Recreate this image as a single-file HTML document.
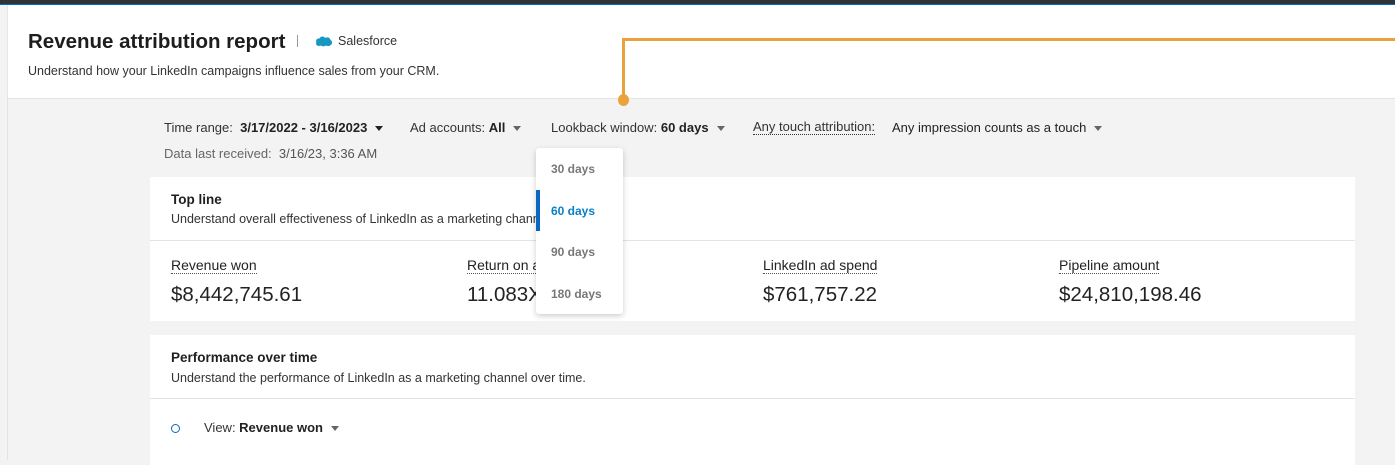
<!DOCTYPE html>
<html><head><meta charset="utf-8"><style>
*{margin:0;padding:0;box-sizing:border-box}
body{width:1395px;height:460px;overflow:hidden;background:#f3f3f3;font-family:"Liberation Sans",Arial,sans-serif;color:#1f1f1f;position:relative}
.abs{position:absolute;white-space:nowrap}
.topbar{position:absolute;left:0;top:0;width:1395px;height:4px;background:#2e3338}
.blue{position:absolute;left:0;top:4px;width:1395px;height:1px;background:#0a66c2}
.header{position:absolute;left:7px;top:5px;width:1388px;height:94px;background:#fff;border-bottom:1px solid #e3e3e3;border-left:1px solid #e6e6e6}
.leftline{position:absolute;left:7px;top:99px;width:1px;height:361px;background:#e3e3e3}
.card{position:absolute;left:150px;width:1205px;background:#fff}
.div{position:absolute;left:0;width:100%;height:1px;background:#e3e3e3}
.lbl{font-size:14px;color:#222;border-bottom:1px dotted #555;font-weight:500}
.val{font-size:20.5px;color:#222}
.caret{display:inline-block;width:0;height:0;border-left:4px solid transparent;border-right:4px solid transparent;border-top:5px solid #666;vertical-align:middle;margin-left:8px}
.f{font-size:13px;color:#333}
.f b{color:#222}
.dd{position:absolute;left:536px;top:148px;width:87px;height:166px;background:#fff;border-radius:3px;box-shadow:0 2px 6px rgba(0,0,0,.2)}
.dd div{position:absolute;left:15px;font-size:12px;color:#777;font-weight:bold}
</style></head><body>
<div class="topbar"></div>
<div class="header"></div>
<div class="blue"></div>
<div class="leftline"></div>
<div class="abs" style="left:28px;top:30px;font-size:20.5px;font-weight:bold;color:#1d1d1d">Revenue attribution report</div>
<div class="abs" style="left:297px;top:35px;width:1px;height:12px;background:#999"></div>
<svg class="abs" style="left:315px;top:35px" width="18" height="12" viewBox="0 0 18 12"><path d="M4 11C1.5 11 .5 9 1.3 7.3 .5 5 2.5 3 4.5 3.5 5.5 1 9 .8 10.2 3 12 1.8 15 2.5 15.5 5 17.6 5.6 17.8 9.5 15 10.5 13.8 11.5 12 11 11 10.5 9.5 11.5 7 11.5 6 10.5Z" fill="#1798c1"/></svg>
<div class="abs" style="left:338px;top:34px;font-size:12.5px;color:#333">Salesforce</div>
<div class="abs" style="left:28px;top:64px;font-size:12.5px;color:#333">Understand how your LinkedIn campaigns influence sales from your CRM.</div>
<div class="abs" style="left:622px;top:38px;width:773px;height:3px;background:#e8a33d"></div>
<div class="abs" style="left:622px;top:38px;width:3px;height:62px;background:#e8a33d"></div>
<div class="abs" style="left:618px;top:94px;width:11px;height:12px;border-radius:50%;background:#e8a33d"></div>
<div class="abs f" style="left:164px;top:120px">Time range:&nbsp; <b>3/17/2022 - 3/16/2023</b><span class="caret" style="border-top-color:#222"></span></div>
<div class="abs f" style="left:410px;top:120px">Ad accounts: <b>All</b><span class="caret"></span></div>
<div class="abs f" style="left:551px;top:120px">Lookback window: <b>60 days</b><span class="caret"></span></div>
<div class="abs f" style="left:753px;top:120px;border-bottom:1px dotted #333;line-height:14px">Any touch attribution:</div>
<div class="abs f" style="left:892px;top:120px;color:#222">Any impression counts as a touch<span class="caret"></span></div>
<div class="abs f" style="left:164px;top:146px;color:#666">Data last received:&nbsp; <span style="color:#555">3/16/23, 3:36 AM</span></div>
<div class="card" style="top:177px;height:144px">
<div class="abs" style="left:21px;top:15px;font-size:13.5px;font-weight:bold">Top line</div>
<div class="abs" style="left:21px;top:35px;font-size:12.5px;color:#333">Understand overall effectiveness of LinkedIn as a marketing channel</div>
<div class="div" style="top:63px"></div>
<div class="abs lbl" style="left:21px;top:80px">Revenue won</div>
<div class="abs val" style="left:21px;top:106px">$8,442,745.61</div>
<div class="abs lbl" style="left:317px;top:80px">Return on ad spend</div>
<div class="abs val" style="left:317px;top:106px">11.083X</div>
<div class="abs lbl" style="left:613px;top:80px">LinkedIn ad spend</div>
<div class="abs val" style="left:613px;top:106px">$761,757.22</div>
<div class="abs lbl" style="left:909px;top:80px">Pipeline amount</div>
<div class="abs val" style="left:909px;top:106px">$24,810,198.46</div>
</div>
<div class="card" style="top:335px;height:130px">
<div class="abs" style="left:21px;top:15px;font-size:13.5px;font-weight:bold">Performance over time</div>
<div class="abs" style="left:21px;top:36px;font-size:12.5px;color:#333">Understand the performance of LinkedIn as a marketing channel over time.</div>
<div class="div" style="top:63px"></div>
<div class="abs" style="left:21px;top:89px;width:9px;height:9px;border:1.5px solid #0a66c2;border-radius:50%"></div>
<div class="abs f" style="left:54px;top:85px">View: <b>Revenue won</b><span class="caret"></span></div>
</div>
<div class="dd">
<div style="top:14px">30 days</div>
<div style="top:56px;color:#0a7fc2">60 days</div>
<span style="position:absolute;left:0;top:42px;width:4px;height:41px;background:#0a66c2"></span>
<div style="top:97px">90 days</div>
<div style="top:139px">180 days</div>
</div>
</body></html>
